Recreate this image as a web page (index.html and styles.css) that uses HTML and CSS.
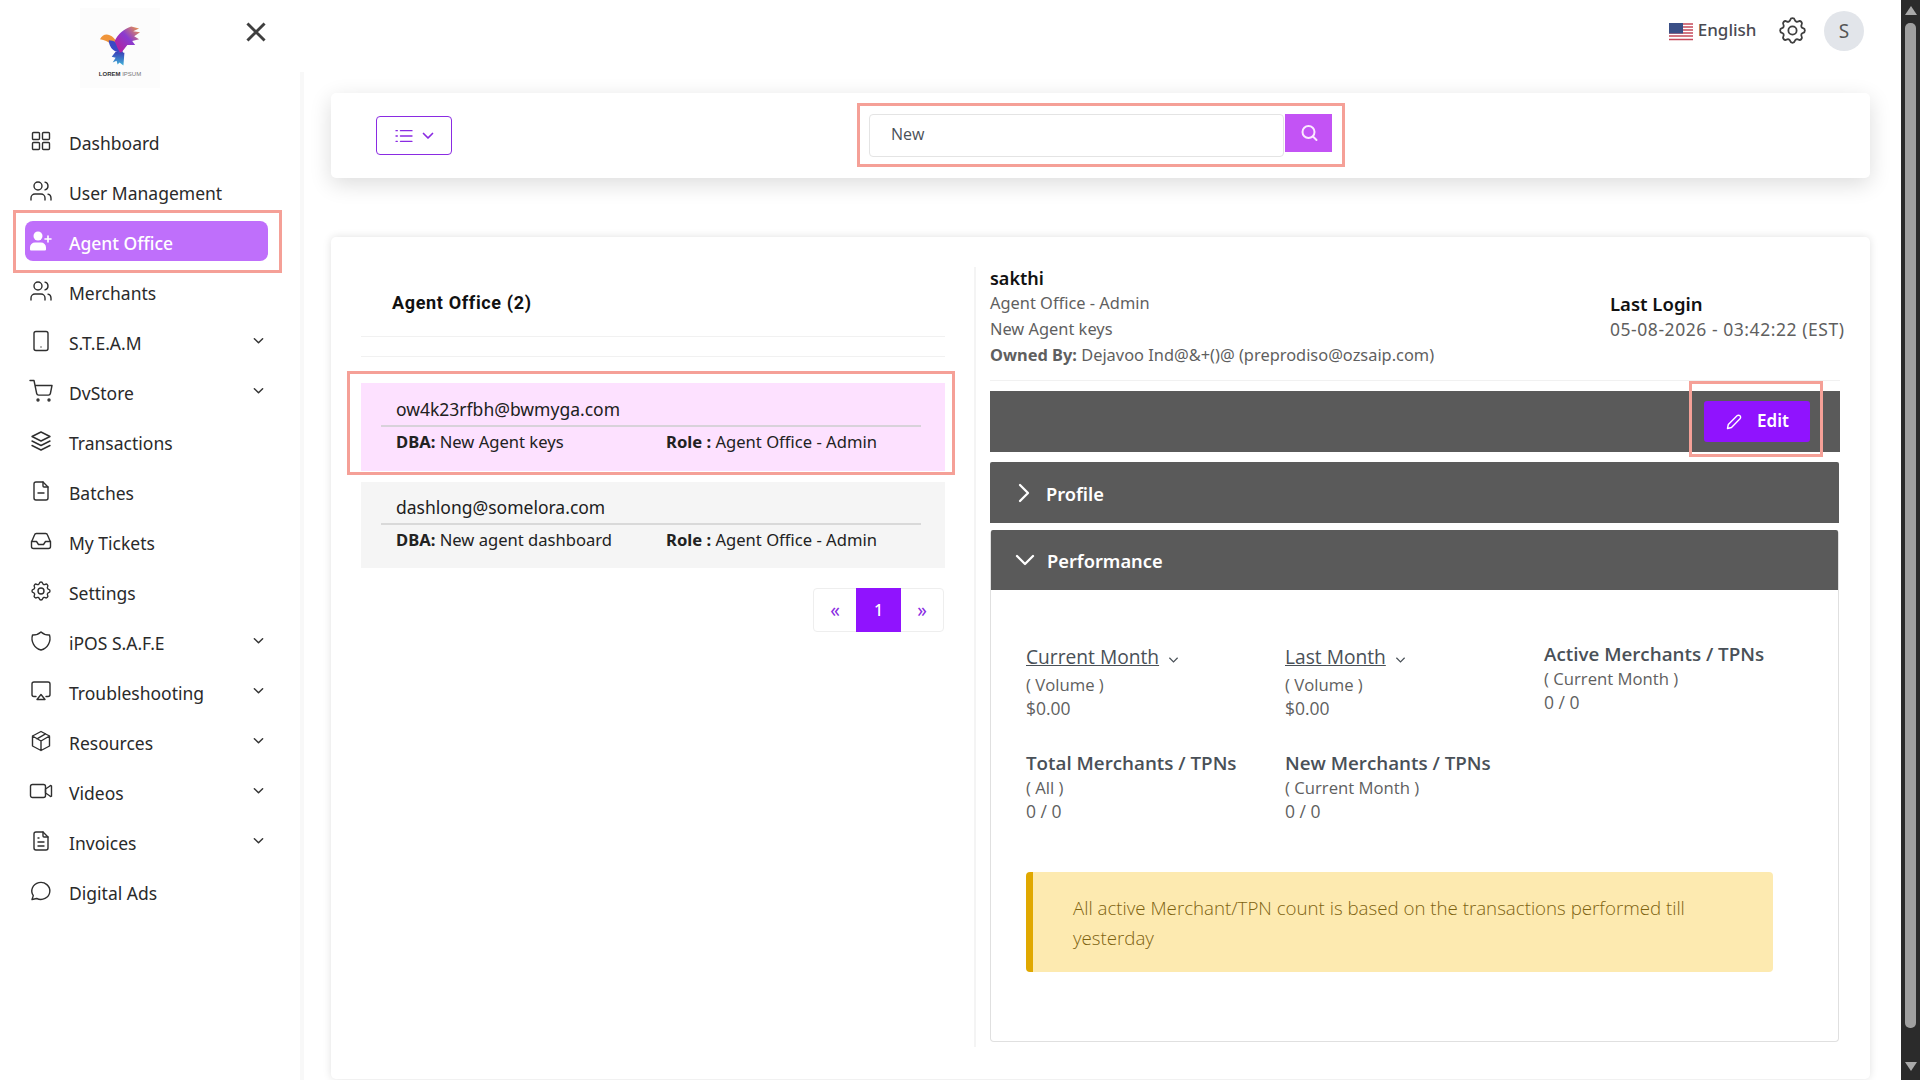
FILE: index.html
```html
<!DOCTYPE html>
<html lang="en">
<head>
<meta charset="utf-8">
<title>Agent Office</title>
<link rel="stylesheet" href="styles.css">
</head>
<body>
<div class="page">
  <aside class="sidebar">
    <div class="brand">
      <div class="logo">
        <svg class="logo-bird" viewBox="0 0 44 44">
          <defs>
            <linearGradient id="wing" x1="0" y1="1" x2="1" y2="0"><stop offset="0" stop-color="#c2188f"/><stop offset=".55" stop-color="#8a3bd0"/><stop offset="1" stop-color="#f5a03c"/></linearGradient>
            <linearGradient id="tail" x1="0" y1="0" x2="0" y2="1"><stop offset="0" stop-color="#3a3fb8"/><stop offset="1" stop-color="#3fb4d8"/></linearGradient>
          </defs>
          <path d="M1 15c2-4 6-6 10-4c3 1 5 4 7 6l-6 3c-3-3-6-4-11-5z" fill="#f0953a"/>
          <path d="M10 16c5 0 9 3 12 6l3 8l-7-2c-5-2-8-7-8-12z" fill="#3b49c4"/>
          <path d="M16 17c3-7 10-13 17-15l8 2l-6 3l7 1l-6 4l5 3l-7 2l3 4l-8 0l-7 9l-3-6z" fill="url(#wing)"/>
          <path d="M17 28l9 1l-1 13l-4-3l-2 2l-1-4l-4 2l3-5l-4-1z" fill="url(#tail)"/>
        </svg>
        <span class="logo-text">LOREM <span class="logo-light">IPSUM</span></span>
      </div>
      <button class="close" aria-label="Close"><svg viewBox="0 0 18 18"><path d="M2 2l14 14M16 2L2 16"/></svg></button>
    </div>
    <nav class="nav">
      <a class="nav-item"><svg class="ico" viewBox="0 0 24 24"><rect x="3.5" y="3.5" width="7" height="7" rx="1"/><rect x="13.5" y="3.5" width="7" height="7" rx="1"/><rect x="3.5" y="13.5" width="7" height="7" rx="1"/><rect x="13.5" y="13.5" width="7" height="7" rx="1"/></svg><span class="nav-label">Dashboard</span></a>
      <a class="nav-item"><svg class="ico" viewBox="0 0 24 24"><circle cx="9" cy="7" r="4"/><path d="M2 21v-2a4 4 0 0 1 4-4h6a4 4 0 0 1 4 4v2M16 3.13a4 4 0 0 1 0 7.75M22 21v-2a4 4 0 0 0-3-3.85"/></svg><span class="nav-label">User Management</span></a>
      <div class="active-wrap">
        <a class="nav-item active"><svg class="ico solid" viewBox="0 0 24 24"><circle cx="9" cy="7" r="4.5"/><path d="M1 20.5v-2a5 5 0 0 1 5-5h6a5 5 0 0 1 5 5v2a1 1 0 0 1-1 1H2a1 1 0 0 1-1-1z"/><path class="plus" d="M19 7v6M16 10h6"/></svg><span class="nav-label">Agent Office</span></a>
      </div>
      <a class="nav-item"><svg class="ico" viewBox="0 0 24 24"><circle cx="9" cy="7" r="4"/><path d="M2 21v-2a4 4 0 0 1 4-4h6a4 4 0 0 1 4 4v2M16 3.13a4 4 0 0 1 0 7.75M22 21v-2a4 4 0 0 0-3-3.85"/></svg><span class="nav-label">Merchants</span></a>
      <a class="nav-item"><svg class="ico" viewBox="0 0 24 24"><rect x="5" y="2.5" width="14" height="19" rx="2"/><path d="M12 18v.01"/></svg><span class="nav-label">S.T.E.A.M</span><svg class="chev" viewBox="0 0 12 8"><path d="M1.5 1.5L6 6l4.500-4.500"/></svg></a>
      <a class="nav-item"><svg class="ico" viewBox="0 0 24 24"><circle cx="9" cy="21" r="1"/><circle cx="20" cy="21" r="1"/><path d="M1 1.500h4l2.680 13a2 2 0 0 0 2 1.600h9.700a2 2 0 0 0 2-1.600L23 6.500H6"/></svg><span class="nav-label">DvStore</span><svg class="chev" viewBox="0 0 12 8"><path d="M1.5 1.5L6 6l4.500-4.500"/></svg></a>
      <a class="nav-item"><svg class="ico" viewBox="0 0 24 24"><path d="M12 3l-9 4.500l9 4.500l9-4.500zM3 12l9 4.500l9-4.500M3 16.500l9 4.500l9-4.500"/></svg><span class="nav-label">Transactions</span></a>
      <a class="nav-item"><svg class="ico" viewBox="0 0 24 24"><path d="M14 3v4a1 1 0 0 0 1 1h4"/><path d="M17 21H7a2 2 0 0 1-2-2V5a2 2 0 0 1 2-2h7l5 5v11a2 2 0 0 1-2 2zM9 14h6"/></svg><span class="nav-label">Batches</span></a>
      <a class="nav-item"><svg class="ico" viewBox="0 0 24 24"><path d="M2.500 13l3-7a2 2 0 0 1 2-1.500h9a2 2 0 0 1 2 1.500l3 7v4.500a2 2 0 0 1-2 2h-15a2 2 0 0 1-2-2z"/><path d="M2.500 12.500h5l2 3h5l2-3h5"/></svg><span class="nav-label">My Tickets</span></a>
      <a class="nav-item"><svg class="ico" viewBox="0 0 24 24"><path d="M10.325 4.317c.426-1.756 2.924-1.756 3.35 0a1.724 1.724 0 0 0 2.573 1.066c1.543-.94 3.31.826 2.37 2.37a1.724 1.724 0 0 0 1.065 2.572c1.756.426 1.756 2.924 0 3.35a1.724 1.724 0 0 0-1.066 2.573c.94 1.543-.826 3.31-2.37 2.37a1.724 1.724 0 0 0-2.572 1.065c-.426 1.756-2.924 1.756-3.35 0a1.724 1.724 0 0 0-2.573-1.066c-1.543.94-3.31-.826-2.37-2.37a1.724 1.724 0 0 0-1.065-2.572c-1.756-.426-1.756-2.924 0-3.35a1.724 1.724 0 0 0 1.066-2.573c-.94-1.543.826-3.31 2.37-2.37c1 .608 2.296.07 2.572-1.065z"/><circle cx="12" cy="12" r="3"/></svg><span class="nav-label">Settings</span></a>
      <a class="nav-item"><svg class="ico" viewBox="0 0 24 24"><path d="M12 3a12 12 0 0 0 8.500 3a12 12 0 0 1-8.500 15a12 12 0 0 1-8.500-15a12 12 0 0 0 8.500-3"/></svg><span class="nav-label">iPOS S.A.F.E</span><svg class="chev" viewBox="0 0 12 8"><path d="M1.5 1.5L6 6l4.500-4.500"/></svg></a>
      <a class="nav-item"><svg class="ico" viewBox="0 0 24 24"><path d="M7 17.500H5a2 2 0 0 1-2-2V5a2 2 0 0 1 2-2h14a2 2 0 0 1 2 2v10.500a2 2 0 0 1-2 2h-2M8 20.500l4-5l4 5z"/></svg><span class="nav-label">Troubleshooting</span><svg class="chev" viewBox="0 0 12 8"><path d="M1.5 1.5L6 6l4.500-4.500"/></svg></a>
      <a class="nav-item"><svg class="ico" viewBox="0 0 24 24"><path d="M12 2.500l8.500 4.500v10l-8.500 4.500l-8.500-4.500V7zM12 12l8.500-5M12 12v9.500M12 12L3.500 7M16.500 4.800l-8.500 5"/></svg><span class="nav-label">Resources</span><svg class="chev" viewBox="0 0 12 8"><path d="M1.5 1.5L6 6l4.500-4.500"/></svg></a>
      <a class="nav-item"><svg class="ico" viewBox="0 0 24 24"><path d="M16.500 10l4.500-3a.8.8 0 0 1 1.500.6v8.800a.8.8 0 0 1-1.500.6l-4.500-3z"/><rect x="1.500" y="5.500" width="15" height="13" rx="2"/></svg><span class="nav-label">Videos</span><svg class="chev" viewBox="0 0 12 8"><path d="M1.5 1.5L6 6l4.500-4.500"/></svg></a>
      <a class="nav-item"><svg class="ico" viewBox="0 0 24 24"><path d="M14 3v4a1 1 0 0 0 1 1h4"/><path d="M17 21H7a2 2 0 0 1-2-2V5a2 2 0 0 1 2-2h7l5 5v11a2 2 0 0 1-2 2zM9 9h1M9 13h6M9 17h6"/></svg><span class="nav-label">Invoices</span><svg class="chev" viewBox="0 0 12 8"><path d="M1.5 1.5L6 6l4.500-4.500"/></svg></a>
      <a class="nav-item"><svg class="ico" viewBox="0 0 24 24"><path d="M3 20.500l1.300-3.900a9 8.500 0 1 1 3.400 2.900l-4.700 1"/></svg><span class="nav-label">Digital Ads</span></a>
    </nav>
  </aside>

  <main class="main">
    <header class="topbar">
      <div class="lang">
        <svg class="flag" viewBox="0 0 24 18"><rect width="24" height="18" fill="#fff"/><path d="M0 1h24M0 4h24M0 7h24M0 10h24M0 13h24M0 16.500h24" stroke="#c5495a" stroke-width="1.400"/><rect width="14" height="10.500" fill="#3a4f86"/></svg>
        <span class="lang-text">English</span>
      </div>
      <svg class="gear" viewBox="0 0 24 24"><path d="M10.325 4.317c.426-1.756 2.924-1.756 3.35 0a1.724 1.724 0 0 0 2.573 1.066c1.543-.94 3.31.826 2.37 2.37a1.724 1.724 0 0 0 1.065 2.572c1.756.426 1.756 2.924 0 3.35a1.724 1.724 0 0 0-1.066 2.573c.94 1.543-.826 3.31-2.37 2.37a1.724 1.724 0 0 0-2.572 1.065c-.426 1.756-2.924 1.756-3.35 0a1.724 1.724 0 0 0-2.573-1.066c-1.543.94-3.31-.826-2.37-2.37a1.724 1.724 0 0 0-1.065-2.572c-1.756-.426-1.756-2.924 0-3.35a1.724 1.724 0 0 0 1.066-2.573c-.94-1.543.826-3.31 2.37-2.37c1 .608 2.296.07 2.572-1.065z"/><circle cx="12" cy="12" r="3"/></svg>
      <div class="avatar">S</div>
    </header>

    <section class="toolbar">
      <button class="view-btn">
        <svg class="list-ico" viewBox="0 0 20 18"><path d="M6 3h13M6 9h13M6 15h13M1 3h1.500M1 9h1.500M1 15h1.500"/></svg>
        <svg class="list-chev" viewBox="0 0 12 8"><path d="M1.500 1.500L6 6l4.500-4.500"/></svg>
      </button>
      <div class="search">
        <div class="search-input">New</div>
        <button class="search-btn" aria-label="Search"><svg viewBox="0 0 18 18"><circle cx="8.500" cy="8" r="6"/><path d="M13 12.500l3.500 3.500"/></svg></button>
      </div>
    </section>

    <section class="panel">
      <div class="list-col">
        <h2 class="list-title">Agent Office (2)</h2>
        <div class="list-spacer"></div>
        <article class="row row-selected">
          <div class="row-email">ow4k23rfbh@bwmyga.com</div>
          <div class="row-meta"><span class="row-dba"><b>DBA:</b> New Agent keys</span><span><b>Role :</b> Agent Office - Admin</span></div>
        </article>
        <article class="row row-plain">
          <div class="row-email">dashlong@somelora.com</div>
          <div class="row-meta"><span class="row-dba"><b>DBA:</b> New agent dashboard</span><span><b>Role :</b> Agent Office - Admin</span></div>
        </article>
        <div class="pager-wrap">
          <div class="pager"><span class="pg pg-side">«</span><span class="pg pg-on">1</span><span class="pg pg-side">»</span></div>
        </div>
      </div>

      <div class="detail-col">
        <div class="detail-head">
          <div>
            <div class="who">sakthi</div>
            <div class="who-line">Agent Office - Admin</div>
            <div class="who-line">New Agent keys</div>
            <div class="who-line"><b>Owned By:</b> Dejavoo Ind@&amp;+()@ (preprodiso@ozsaip.com)</div>
          </div>
          <div class="login">
            <div class="login-title">Last Login</div>
            <div class="login-date">05-08-2026 - 03:42:22 (EST)</div>
          </div>
        </div>
        <div class="edit-bar">
          <button class="edit-btn"><svg viewBox="0 0 18 18"><path d="M2.500 15.500l.8-4L12 2.800a2 2 0 0 1 3 3L6.500 14.500z"/></svg><span class="edit-text">Edit</span></button>
        </div>
        <div class="acc-head acc-profile"><svg class="acc-ico" viewBox="0 0 14 20"><path d="M3 2l8 8l-8 8"/></svg><span>Profile</span></div>
        <div class="perf">
          <div class="acc-head acc-perf"><svg class="acc-ico wide" viewBox="0 0 20 14"><path d="M2 3l8 8l8-8"/></svg><span>Performance</span></div>
          <div class="perf-body">
            <div class="stats">
              <div class="stat stat-link"><div class="stat-title"><u>Current Month</u><svg class="stat-chev" viewBox="0 0 12 8"><path d="M1.500 1.500L6 6l4.500-4.500"/></svg></div><div class="stat-sub">( Volume )</div><div class="stat-val">$0.00</div></div>
              <div class="stat stat-link"><div class="stat-title"><u>Last Month</u><svg class="stat-chev" viewBox="0 0 12 8"><path d="M1.500 1.500L6 6l4.500-4.500"/></svg></div><div class="stat-sub">( Volume )</div><div class="stat-val">$0.00</div></div>
              <div class="stat"><div class="stat-title">Active Merchants / TPNs</div><div class="stat-sub">( Current Month )</div><div class="stat-val">0 / 0</div></div>
              <div class="stat"><div class="stat-title">Total Merchants / TPNs</div><div class="stat-sub">( All )</div><div class="stat-val">0 / 0</div></div>
              <div class="stat"><div class="stat-title">New Merchants / TPNs</div><div class="stat-sub">( Current Month )</div><div class="stat-val">0 / 0</div></div>
            </div>
            <div class="notice">All active Merchant/TPN count is based on the transactions performed till yesterday</div>
          </div>
        </div>
      </div>
    </section>
  </main>

  <div class="scrollbar">
    <span class="arrow-up"></span>
    <span class="thumb"></span>
    <span class="arrow-down"></span>
  </div>
</div>
</body>
</html>
```
FILE: styles.css
```css
*, *::before, *::after { box-sizing: border-box; }
html, body { margin: 0; height: 100%; overflow: hidden; background: #fff; }
body { font-family: "Noto Sans", sans-serif; color: #212529; }
button { font: inherit; border: 0; padding: 0; background: none; }
b { font-weight: 700; }

.page { display: flex; height: 1080px; overflow: hidden; }

/* sidebar */
.sidebar { width: 301px; flex: none; display: flex; flex-direction: column; }
.brand { height: 72px; flex: none; display: flex; align-items: flex-start; padding: 8px 0 0 80px; }
.logo { width: 80px; height: 80px; background: #fcfcfc; display: flex; flex-direction: column; align-items: center; padding-top: 16px; position: relative; z-index: 1; }
.logo-bird { width: 43px; height: 44px; display: block; }
.logo-text { font-family: "Liberation Sans", sans-serif; font-size: 6px; line-height: 8px; font-weight: 700; color: #333; white-space: nowrap; margin-top: 2px; }
.logo-light { font-weight: 400; color: #777; }
.close { margin: 13px 0 0 85px; width: 22px; height: 22px; display: block; }
.close svg { width: 22px; height: 22px; display: block; fill: none; stroke: #3f3f3f; stroke-width: 2.400; }

.nav { flex: 1; padding: 49px 0 0 25px; margin-right: -3px; border-right: 4px solid #f8f8f8; }
.nav-item { display: flex; align-items: center; width: 243px; height: 40px; margin-bottom: 10px; border-radius: 8px; padding: 0 0 0 4px; color: #2a2a2a; font-size: 17.500px; }
.nav-label { flex: 1; padding: 4px 0 0 16px; white-space: nowrap; }
.ico { width: 24px; height: 24px; flex: none; fill: none; stroke: #2f2f2f; stroke-width: 1.400; stroke-linecap: round; stroke-linejoin: round; }
.chev { width: 11px; height: 8px; flex: none; margin-right: 4px; fill: none; stroke: #333; stroke-width: 1.600; stroke-linecap: round; stroke-linejoin: round; }
.active-wrap { position: relative; }
.active-wrap::after { content: ""; position: absolute; left: -12px; top: -11px; width: 269px; height: 63px; border: 3px solid #f5a097; pointer-events: none; }
.nav-item.active { background: #bf6ffb; color: #fff; font-weight: 500; }
.ico.solid { fill: #fff; stroke: none; }
.ico.solid .plus { fill: none; stroke: #fff; stroke-width: 1.600; }

/* main */
.main { flex: 1; min-width: 0; display: flex; flex-direction: column; padding: 0 31px 0 30px; }
.topbar { height: 93px; flex: none; display: flex; justify-content: flex-end; align-items: flex-start; padding: 11px 6px 0 0; }
.lang { display: flex; align-items: center; height: 36px; color: #4a4a52; font-size: 17px; font-weight: 500; }
.flag { width: 24px; height: 18px; margin: 6px 5px 0 0; }
.gear { width: 33px; height: 33px; margin: 2.500px 0 0 19px; fill: none; stroke: #3f3f3f; stroke-width: 1.300; }
.avatar { width: 40px; height: 40px; margin-left: 15.500px; border-radius: 50%; background: #e2e5ea; color: #555; display: flex; align-items: center; justify-content: center; font-size: 19px; }

.toolbar { height: 85px; flex: none; background: #fff; border-radius: 5px; box-shadow: 0 6px 22px rgba(0,0,0,.14); display: flex; padding: 23px 0 0 45px; position: relative; }
.view-btn { width: 76px; height: 39px; border: 1.500px solid #8a2be2; border-radius: 4px; display: flex; align-items: center; justify-content: center; gap: 9px; }
.list-ico { width: 18px; height: 16px; fill: none; stroke: #8a2be2; stroke-width: 1.500; stroke-linecap: round; }
.list-chev { width: 12px; height: 8px; fill: none; stroke: #8a2be2; stroke-width: 1.700; stroke-linecap: round; stroke-linejoin: round; }
.search { position: relative; display: flex; align-items: flex-start; margin: -2px 0 0 417px; }
.search::after { content: ""; position: absolute; left: -12px; top: -11px; width: 488px; height: 64px; border: 3px solid #f5a097; pointer-events: none; }
.search-input { width: 415px; height: 43px; border: 1px solid #e4e4e4; border-radius: 4px; padding-left: 21px; font-family: "Open Sans", sans-serif; font-size: 16px; line-height: 38px; color: #4a5058; }
.search-btn { width: 47px; height: 38px; background: #c353f5; display: flex; align-items: center; justify-content: center; margin-left: 1px; }
.search-btn svg { width: 18px; height: 18px; fill: none; stroke: #fbe9ff; stroke-width: 2; stroke-linecap: round; }

.panel { height: 842px; flex: none; margin-top: 59px; background: #fff; border-radius: 5px; box-shadow: 0 0 8px rgba(0,0,0,.12); display: grid; grid-template-columns: 613px 1fr; padding: 30px 30px 0 30px; align-items: start; }

/* list */
.list-col { padding-right: 29px; }
.list-title { margin: 0; height: 70px; padding: 24px 0 0 31px; border-bottom: 1px solid #f1f1f1; font-family: "Roboto", sans-serif; font-size: 18px; line-height: 24px; font-weight: 700; color: #111; letter-spacing: .65px; }
.list-spacer { height: 20px; border-bottom: 1px solid #f1f1f1; }
.row { padding: 0 24px 0 20px; }
.row-selected { margin-top: 26px; height: 88px; background: #fde1ff; position: relative; padding-top: 12px; }
.row-selected::after { content: ""; position: absolute; left: -14px; top: -12px; width: 608px; height: 104px; border: 3px solid #f5a097; pointer-events: none; }
.row-plain { margin-top: 11px; height: 86px; background: #f5f5f5; padding-top: 11px; }
.row-email { padding: 0 0 0 15px; font-size: 17.500px; line-height: 29px; color: #202020; height: 30px; border-bottom: 2px solid #d8d2da; box-sizing: content-box; }
.row-plain .row-email { border-bottom-color: #d9d9d9; }
.row-meta { display: flex; padding-left: 15px; font-size: 16.600px; line-height: 30px; color: #222; }
.row-dba { width: 270px; flex: none; }
.pager-wrap { display: flex; justify-content: flex-end; margin: 20px 1px 0 0; }
.pager { display: flex; height: 44px; border: 1px solid #eee; border-radius: 4px; }
.pg { display: flex; align-items: center; justify-content: center; font-size: 19px; }
.pg-side { width: 42px; color: #8a2be2; }
.pg-on { width: 45px; background: #9013fe; color: #fff; font-size: 16px; font-weight: 500; margin: -1px 0; }

/* detail */
.detail-col { height: 780px; border-left: 2px solid #f4f4f4; padding: 0 0 0 14px; }
.detail-head { display: flex; justify-content: space-between; height: 114px; border-bottom: 1px solid #f1f1f1; }
.who { font-size: 18px; line-height: 22px; font-weight: 600; color: #111; }
.who-line { font-size: 16.400px; line-height: 26px; color: #5f5f5f; }
.who-line:nth-child(2) { margin-top: 1px; }
.login { width: 230px; padding-top: 24px; white-space: nowrap; }
.login-title { font-size: 18.500px; line-height: 26px; font-weight: 600; color: #111; }
.login-date { font-size: 17.500px; line-height: 24px; color: #5f5f5f; letter-spacing: .55px; }
.edit-bar { height: 61px; margin-top: 10px; background: #5a5a5a; display: flex; align-items: center; justify-content: flex-end; padding-right: 30px; position: relative; }
.edit-bar::after { content: ""; position: absolute; right: 17px; top: -10px; width: 134px; height: 76px; border: 3px solid #f5a097; pointer-events: none; }
.edit-btn { width: 106px; height: 41px; background: #9013fe; border-radius: 3px; color: #fff; font-size: 17px; font-weight: 600; display: flex; align-items: center; padding-left: 21px; gap: 14px; }
.edit-text { margin-top: -2px; }
.edit-btn svg { width: 18px; height: 18px; fill: none; stroke: #fff; stroke-width: 1.400; stroke-linejoin: round; }
.acc-head { position: relative; height: 60px; background: #5a5a5a; color: #fff; display: flex; align-items: center; font-size: 18.300px; font-weight: 600; padding-left: 27px; border-radius: 2px 2px 0 0; }
.acc-head span { position: absolute; left: 56px; padding-top: 2px; }
.acc-perf span { padding-top: 0; }
.acc-profile { height: 61px; margin-top: 10px; width: 849px; }
.acc-ico { width: 14px; height: 20px; fill: none; stroke: #fff; stroke-width: 2.300; stroke-linecap: round; stroke-linejoin: round; }
.acc-ico.wide { width: 20px; height: 14px; margin: -1px 0 0 -3px; }
.perf { margin-top: 7px; width: 849px; height: 512px; border: 1px solid #e0e0e0; border-top: 0; border-radius: 4px; }
.perf-body { padding: 51px 0 0 35px; }
.stats { display: grid; grid-template-columns: repeat(3, 259px); row-gap: 31px; column-gap: 0; font-family: "Open Sans", sans-serif; color: #5f5f5f; }
.stat-title { font-size: 18.800px; line-height: 26px; font-weight: 600; color: #495057; white-space: nowrap; }
.stat-sub { font-size: 16.700px; line-height: 24px; }
.stat-val { font-size: 17.500px; line-height: 22px; }
.stat-link { padding-top: 3px; }
.stat-link .stat-sub { margin-top: 3px; }
.stat-link .stat-title { font-weight: 500; font-size: 19.200px; }
.stat-chev { width: 11px; height: 8px; margin-left: 9px; fill: none; stroke: #495057; stroke-width: 1.300; }
.notice { width: 747px; height: 100px; margin-top: 50px; padding: 21px 40px 0 40px; background: #fdeab0; border-left: 7px solid #e0a800; border-radius: 4px; color: #7e6310; font-family: "Open Sans", sans-serif; font-weight: 300; font-size: 18.700px; line-height: 30px; }

/* scrollbar */
.scrollbar { width: 19px; flex: none; background: #2b2b2b; display: flex; flex-direction: column; align-items: center; }
.arrow-up { margin-top: 6px; border: 6px solid transparent; border-top: 0; border-bottom: 9px solid #a9a9a9; }
.thumb { width: 11px; height: 1005px; margin-top: 8px; border-radius: 5px; background: #a0a0a0; }
.arrow-down { margin-top: 34px; border: 6px solid transparent; border-bottom: 0; border-top: 9px solid #a9a9a9; }
```
